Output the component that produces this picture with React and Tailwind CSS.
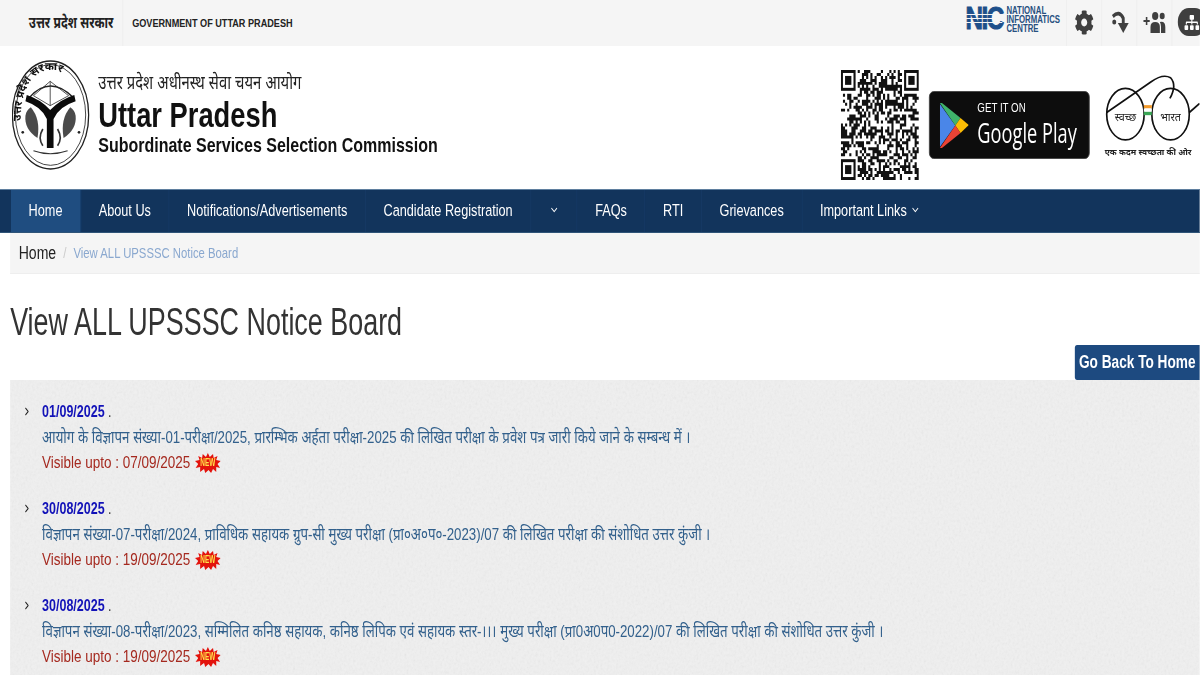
import { FaCog, FaSitemap } from "react-icons/fa";
import { ChevronDown, ChevronRight } from "lucide-react";

const navItems = [
  { label: "Home", active: true },
  { label: "About Us" },
  { label: "Notifications/Advertisements" },
  { label: "Candidate Registration" },
  { chevronOnly: true },
  { label: "FAQs" },
  { label: "RTI" },
  { label: "Grievances" },
  { label: "Important Links", chevron: true },
];

const notices = [
  {
    date: "01/09/2025",
    text: "आयोग के विज्ञापन संख्या-01-परीक्षा/2025, प्रारम्भिक अर्हता परीक्षा-2025 की लिखित परीक्षा के प्रवेश पत्र जारी किये जाने के सम्बन्ध में ।",
    upto: "07/09/2025",
  },
  {
    date: "30/08/2025",
    text: "विज्ञापन संख्या-07-परीक्षा/2024, प्राविधिक सहायक ग्रुप-सी मुख्य परीक्षा (प्रा०अ०प०-2023)/07 की लिखित परीक्षा की संशोधित उत्तर कुंजी ।",
    upto: "19/09/2025",
  },
  {
    date: "30/08/2025",
    text: "विज्ञापन संख्या-08-परीक्षा/2023, सम्मिलित कनिष्ठ सहायक, कनिष्ठ लिपिक एवं सहायक स्तर-।।। मुख्य परीक्षा (प्रा0अ0प0-2022)/07 की लिखित परीक्षा की संशोधित उत्तर कुंजी ।",
    upto: "19/09/2025",
  },
];

// pseudo random modules, the finder squares are drawn on top
function qrPath() {
  const size = 37;
  let seed = 7;
  let d = "";
  const inFinder = (x, y) =>
    (x < 8 && y < 8) || (x > size - 9 && y < 8) || (x < 8 && y > size - 9);
  for (let y = 0; y < size; y++) {
    for (let x = 0; x < size; x++) {
      seed = (seed * 1103515245 + 12345) & 0x7fffffff;
      if (!inFinder(x, y) && (seed >> 16) % 100 < 52) d += `M${x} ${y}h1v1h-1z`;
    }
  }
  return d;
}

function QrCode() {
  const finders = [[0, 0], [30, 0], [0, 30]];
  return (
    <svg viewBox="0 0 37 37" preserveAspectRatio="none" className="mr-[13px] mt-[24px] h-[110px] w-[100px] shrink-0">
      <path d={qrPath()} fill="#111" />
      {finders.map(([x, y]) => (
        <g key={`${x}-${y}`}>
          <rect x={x + 0.5} y={y + 0.5} width="6" height="6" fill="none" stroke="#111" />
          <rect x={x + 2} y={y + 2} width="3" height="3" fill="#111" />
        </g>
      ))}
    </svg>
  );
}

function Emblem() {
  return (
    <svg viewBox="35 28 233 330" preserveAspectRatio="none" className="h-[110px] w-[100px] shrink-0">
      <ellipse cx="151" cy="193" rx="114" ry="162" fill="none" stroke="#222" strokeWidth="4" />
      <ellipse cx="151" cy="193" rx="105" ry="151" fill="none" stroke="#222" strokeWidth="2.5" />
      <path id="emblem-arc" d="M62 215 C60 110 100 58 151 58 C202 58 245 110 243 215" fill="none" />
      <text fontSize="33" fill="#111" fontWeight="700">
        <textPath href="#emblem-arc" startOffset="1%">उत्तर प्रदेश सरकार</textPath>
      </text>
      <path d="M88 140 Q150 72 218 140" fill="none" stroke="#222" strokeWidth="4" />
      <path d="M150 92 L100 135 L150 165 L205 135 Z M150 92 V165" fill="none" stroke="#333" strokeWidth="2.5" />
      <path d="M80 133 Q120 145 150 178 Q182 145 222 133 L226 152 Q176 168 160 205 L160 292 L140 292 L140 205 Q124 168 76 152 Z" fill="#0b0b0b" />
      <path d="M92 170 Q122 205 112 262 Q72 235 76 195 Q78 180 92 170 Z" fill="#4a4a4a" />
      <path d="M210 170 Q180 205 190 262 Q230 235 226 195 Q224 180 210 170 Z" fill="#4a4a4a" />
      <path d="M128 285 Q112 262 128 235 M172 285 Q188 262 172 235" fill="none" stroke="#333" strokeWidth="5" />
      <path d="M100 300 Q150 318 202 300" fill="none" stroke="#333" strokeWidth="3" />
      <circle cx="68" cy="245" r="4" fill="#222" />
      <circle cx="236" cy="245" r="4" fill="#222" />
    </svg>
  );
}

function GooglePlayBadge() {
  return (
    <div className="mr-[6px] mt-[45px] flex h-[68px] w-[206px] shrink-0 items-center gap-[11px] rounded-[6px] border border-[#444] bg-[#0d0d0d] pl-[13px] text-white">
      <svg viewBox="0 0 28 45" preserveAspectRatio="none" className="h-[45px] w-[37px] shrink-0">
        <polygon points="0,1 15,22.5 0,44" fill="#4a86e8" />
        <polygon points="0,0 2,0 20,15 15,22.5" fill="#3fb36b" />
        <polygon points="20,15 28,22 20,30 15,22.5" fill="#fbbc04" />
        <polygon points="0,45 2,45 20,30 15,22.5" fill="#ea4335" />
      </svg>
      <div className="flex flex-col">
        <span className="text-[12.5px] leading-[15px]">GET IT ON</span>
        <span className="origin-left scale-x-[0.865] whitespace-nowrap font-['Open_Sans',sans-serif] text-[27px] leading-[34px]">Google Play</span>
      </div>
    </div>
  );
}

function SwachhBharat() {
  return (
    <svg viewBox="0 0 315 290" preserveAspectRatio="none" className="mt-[19px] h-[97px] w-[135px] shrink-0">
      <ellipse cx="93" cy="147" rx="56" ry="77" fill="none" stroke="#111" strokeWidth="5" />
      <ellipse cx="228" cy="147" rx="56" ry="77" fill="none" stroke="#111" strokeWidth="5" />
      <rect x="148" y="120" width="24" height="10" fill="#f39a2b" />
      <rect x="148" y="130" width="24" height="10" fill="#fff" />
      <rect x="148" y="140" width="24" height="10" fill="#3aa655" />
      <path d="M37 142 L170 50 Q205 25 228 38 Q248 60 226 100" fill="none" stroke="#111" strokeWidth="5" />
      <path d="M284 142 L315 115" fill="none" stroke="#111" strokeWidth="5" />
      <text x="93" y="168" textAnchor="middle" fontSize="32" fill="#222">स्वच्छ</text>
      <text x="228" y="168" textAnchor="middle" fontSize="32" fill="#222">भारत</text>
      <text x="161" y="270" textAnchor="middle" fontSize="25" fontWeight="700" fill="#222">एक कदम स्वच्छता की ओर</text>
    </svg>
  );
}

function NicLogo() {
  return (
    <div className="mb-[8px] flex items-center gap-[5px]">
      <div className="relative text-[31px] font-black leading-[28px] tracking-[-2px] text-[#1d4f8a] [-webkit-text-stroke:1px_#1d4f8a]">
        NIC
        <div className="absolute inset-x-0 top-[9px] h-[1px] bg-[#f5f5f5]" />
        <div className="absolute inset-x-0 top-[13px] h-[1px] bg-[#f5f5f5]" />
        <div className="absolute inset-x-0 top-[17px] h-[1px] bg-[#f5f5f5]" />
      </div>
      <div className="flex flex-col text-[10px] font-bold leading-[9px] text-[#27507f]">
        <span>NATIONAL</span>
        <span>INFORMATICS</span>
        <span>CENTRE</span>
      </div>
    </div>
  );
}

function TopIcon({ children, wide }) {
  return (
    <div className={`flex h-[46px] items-center justify-center border-l border-[#ececec] pb-[2px] text-[#3f3f3f] ${wide ? "w-[36px] justify-start pl-[7px]" : "w-[45px]"}`}>
      {children}
    </div>
  );
}

function NewBadge() {
  return (
    <svg viewBox="0 0 40 20" preserveAspectRatio="none" className="ml-[6px] inline-block h-[20px] w-[33px] align-[-5px]">
      <polygon
        points="20,0 23,4 28,1 29,5 35,3 33,7 40,8 35,11 39,15 33,14 33,19 28,16 25,20 21,17 16,20 14,16 8,19 8,14 1,15 5,11 0,8 7,7 5,3 11,5 12,1 17,4"
        fill="#e3130c"
      />
      <text x="20" y="13.5" textAnchor="middle" fontSize="10" fontWeight="700" fill="#ffe14a">NEW</text>
    </svg>
  );
}

export default function App() {
  return (
    <div className="h-[675px] w-[1200px] overflow-hidden bg-white font-['Liberation_Sans','Noto_Sans',sans-serif]">
      {/* the source screenshot is squeezed horizontally, so the page is too */}
      <div className="w-[1538px] origin-top-left scale-x-[0.78]">
        {/* Top strip */}
        <div className="flex h-[46px] items-center justify-between bg-[#f5f5f5]">
          <div className="flex h-full items-center">
            <div className="flex h-full items-center border-r border-[#ececec] pl-[37px] pr-[12px] text-[15.5px] font-bold text-[#222]">उत्तर प्रदेश सरकार</div>
            <div className="pl-[11px] text-[11.7px] font-bold text-[#222]">GOVERNMENT OF UTTAR PRADESH</div>
          </div>
          <div className="flex h-full items-center">
            <div className="pr-[8px]"><NicLogo /></div>
            <TopIcon><FaCog className="h-[25px] w-[28px]" /></TopIcon>
            <TopIcon>
              <svg viewBox="0 0 26 26" className="h-[24px] w-[26px]">
                <circle cx="6" cy="13" r="2.8" fill="#3f3f3f" />
                <path d="M4 7 Q13 0 18.500 9 L18.500 15" fill="none" stroke="#3f3f3f" strokeWidth="4" />
                <polygon points="11,14 26,14 18.500,25" fill="#3f3f3f" />
              </svg>
            </TopIcon>
            <TopIcon>
              <svg viewBox="0 0 30 24" className="h-[24px] w-[30px]" fill="#3f3f3f">
                <path d="M1 10h3V7h2v3h3v2H6v3H4v-3H1z" />
                <circle cx="16" cy="6" r="4" />
                <circle cx="25" cy="6" r="3.2" />
                <path d="M10 23v-6q0-5 6-5t6 5v6z" />
                <path d="M23.500 23v-6q0-3-1.500-5 7-1 7 5v6z" />
              </svg>
            </TopIcon>
            <TopIcon wide>
              <div className="flex h-[28px] w-[36px] shrink-0 items-center justify-center rounded-full bg-[#3f3f3f] text-white">
                <FaSitemap className="h-[15px] w-[20px]" />
              </div>
            </TopIcon>
          </div>
        </div>

        {/* Header */}
        <div className="flex h-[143px] justify-between pl-[15px]">
          <div className="flex items-start gap-[11px] pt-[14px]">
            <Emblem />
            <div className="pt-[9px] text-[#111]">
              <div className="text-[19px] leading-[28px] text-[#222]">उत्तर प्रदेश अधीनस्थ सेवा चयन आयोग</div>
              <div className="text-[35px] font-bold leading-[35px]">Uttar Pradesh</div>
              <div className="text-[20.5px] font-bold leading-[26px]">Subordinate Services Selection Commission</div>
            </div>
          </div>
          <div className="flex items-start">
            <QrCode />
            <GooglePlayBadge />
            <SwachhBharat />
          </div>
        </div>

        {/* Nav */}
        <nav className="flex h-[44px] items-center border-y border-t-[#5f7f9f] border-b-[#2f5478] bg-[#12345c] pl-[14px] text-[16.3px] text-white">
          {navItems.map((item, i) => (
            <div
              key={i}
              className={`flex h-full items-center gap-[4px] border-r border-[#163a66] px-[22.7px] pb-[2px] last:border-r-0 ${item.active ? "bg-[#1f4d80]" : ""}`}
            >
              {item.label}
              {(item.chevron || item.chevronOnly) && <ChevronDown className="h-[14px] w-[13px]" strokeWidth={2} />}
            </div>
          ))}
        </nav>

        {/* Breadcrumb */}
        <div className="ml-[13px] flex h-[41px] items-center gap-[9px] border-b border-[#eeeeee] bg-[#f5f5f5] pl-[11px] pt-[1px] text-[18px] text-[#222]">
          Home
          <span className="text-[15px] text-[#cccccc]">/</span>
          <span className="text-[14.5px] text-[#8aa8cf]">View ALL UPSSSC Notice Board</span>
        </div>

        {/* Title */}
        <h1 className="ml-[13px] mt-[26px] origin-left scale-x-[0.908] whitespace-nowrap text-[38px] font-normal leading-[44px] text-[#333]">View ALL UPSSSC Notice Board</h1>

        <div className="flex justify-end">
          <div className="mt-[1px] flex h-[35px] w-[160px] items-center justify-center rounded-l-[3px] bg-[#1d4a80] text-[17.5px] font-bold text-white">Go Back To Home</div>
        </div>

        {/* Notice board */}
        <div className="relative ml-[13px] h-[295px] bg-[#f0f0f0] pl-[15px] pt-[19px]">
          <svg className="absolute inset-0 h-full w-full opacity-[0.12]">
            <filter id="paper">
              <feTurbulence type="fractalNoise" baseFrequency="0.35" numOctaves="3" />
              <feColorMatrix type="saturate" values="0" />
            </filter>
            <rect width="100%" height="100%" filter="url(#paper)" />
          </svg>
          <ul className="relative">
            {notices.map((n, i) => (
              <li key={i} className="mb-[21px] flex">
                <ChevronRight className="mt-[5px] h-[15px] w-[13px] shrink-0 text-[#222]" strokeWidth={2} />
                <div className="ml-[13px]">
                  <div className="text-[16px] leading-[26px] text-[#333]">
                    <span className="font-bold text-[#1212b8]">{n.date}</span> .
                  </div>
                  <div className="whitespace-nowrap text-[17px] leading-[25px] text-[#32608c]">{n.text}</div>
                  <div className="whitespace-nowrap text-[17.3px] leading-[25px] text-[#a5291f]">
                    Visible upto : {n.upto}
                    <NewBadge />
                  </div>
                </div>
              </li>
            ))}
          </ul>
        </div>
      </div>
    </div>
  );
}
